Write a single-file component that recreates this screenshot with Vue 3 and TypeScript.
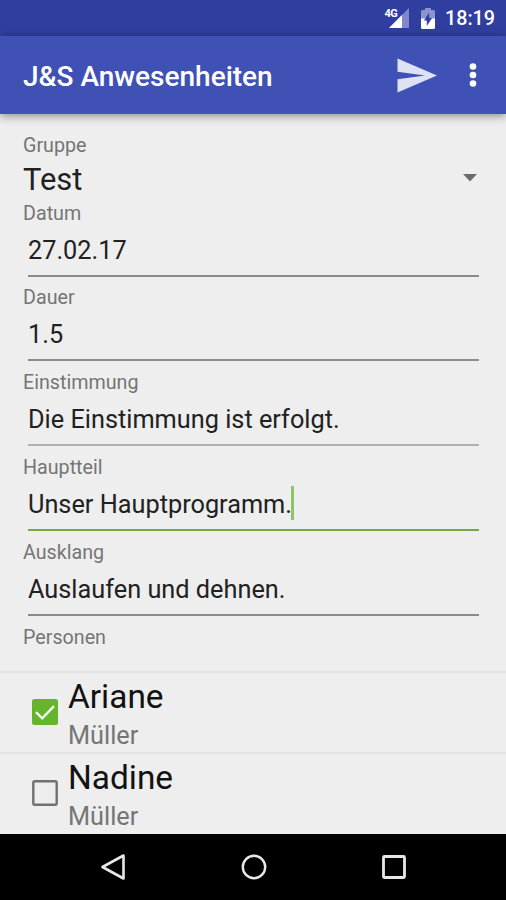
<script setup lang="ts">
import { ref } from 'vue'

interface Field {
  label: string
  value: string
  focused?: boolean
  soft?: boolean
}

interface Person {
  first: string
  last: string
  present: boolean
}

const fields = ref<Field[]>([
  { label: 'Datum', value: '27.02.17' },
  { label: 'Dauer', value: '1.5' },
  { label: 'Einstimmung', value: 'Die Einstimmung ist erfolgt.', soft: true },
  { label: 'Hauptteil', value: 'Unser Hauptprogramm.', focused: true },
  { label: 'Ausklang', value: 'Auslaufen und dehnen.' },
])

const people = ref<Person[]>([
  { first: 'Ariane', last: 'Müller', present: true },
  { first: 'Nadine', last: 'Müller', present: false },
])
</script>

<template>
  <div class="screen">
    <div class="status">
      <span class="network">4G</span>
      <svg class="signal" width="21" height="20" viewBox="0 0 21 20">
        <path d="M20 0V20H0Z" fill="#7f88cb" />
        <path d="M13 7V20H0Z" fill="#fff" />
      </svg>
      <svg class="battery" width="14" height="21" viewBox="0 0 14 21">
        <path d="M4 0h6v2h2.5Q14 2 14 3.5V11H0V3.5Q0 2 1.500 2H4Z" fill="#8c94d0" />
        <path d="M0 10.500H14V19.500Q14 21 12.500 21H1.500Q0 21 0 19.500Z" fill="#fff" />
        <path d="M8.200 4.500V10H11L5.800 18V12.500H3Z" fill="#303f9f" />
      </svg>
      <span class="clock">18:19</span>
    </div>
    <header class="bar">
      <h1 class="title">J&amp;S Anwesenheiten</h1>
      <svg class="send" width="40" height="35" viewBox="0 0 40 35">
        <path d="M0.500 0.500L40 17.500L0.500 34.500V21.200L28 17.500L0.500 13.800Z" fill="#dfe2f4" />
      </svg>
      <svg class="more" width="8" height="24" viewBox="0 0 8 24">
        <circle cx="4" cy="3.500" r="3.300" fill="#fff" />
        <circle cx="4" cy="12" r="3.300" fill="#fff" />
        <circle cx="4" cy="20.500" r="3.300" fill="#fff" />
      </svg>
    </header>
    <main class="content">
      <div class="label">Gruppe</div>
      <div class="spinner">
        <span>Test</span>
        <svg class="arrow" width="14" height="8" viewBox="0 0 14 8"><path d="M0 0H14L7 7.500Z" fill="#6b6b6b" /></svg>
      </div>
      <div v-for="f in fields" :key="f.label" class="field">
        <div class="label">{{ f.label }}</div>
        <div class="input" :class="{ focused: f.focused, soft: f.soft }">
          <span>{{ f.value }}</span><i v-if="f.focused" class="caret" />
        </div>
      </div>
      <div class="label">Personen</div>
    </main>
    <ul class="people">
      <li v-for="p in people" :key="p.first" class="person">
        <svg class="check" width="26" height="26" viewBox="0 0 26 26">
          <template v-if="p.present">
            <rect width="26" height="26" rx="2.500" fill="#66b42b" />
            <path d="M4 13.200L10.200 19.300L22 7.200" fill="none" stroke="#f4f9ef" stroke-width="2.400" />
          </template>
          <rect v-else x="1.300" y="1.300" width="23.400" height="23.400" rx="1.500" fill="none" stroke="#717171" stroke-width="2.400" />
        </svg>
        <div class="names">
          <div class="first">{{ p.first }}</div>
          <div class="last">{{ p.last }}</div>
        </div>
      </li>
    </ul>
    <nav class="nav">
      <svg width="26" height="28" viewBox="0 0 26 28"><path d="M2.500 14L23.500 2.500V25.500Z" fill="none" stroke="#e8e8e8" stroke-width="2.600" stroke-linejoin="round" /></svg>
      <svg width="26" height="28" viewBox="0 0 26 28"><circle cx="13" cy="14" r="11.200" fill="none" stroke="#e8e8e8" stroke-width="2.400" /></svg>
      <svg width="26" height="28" viewBox="0 0 26 28"><rect x="2.500" y="3.500" width="21" height="21" rx="1" fill="none" stroke="#e8e8e8" stroke-width="2.800" /></svg>
    </nav>
  </div>
</template>

<style>
body { margin: 0; background: #eee; }
</style>

<style scoped>
.screen {
  box-sizing: border-box;
  width: 506px;
  height: 900px;
  display: flex;
  flex-direction: column;
  overflow: hidden;
  background: #eee;
  font-family: Roboto, "Liberation Sans", sans-serif;
}
.status {
  flex: none;
  height: 36px;
  display: flex;
  align-items: center;
  justify-content: flex-end;
  padding-right: 11px;
  box-sizing: border-box;
  background: #303f9f;
  color: #fff;
}
.network {
  font-size: 11px;
  font-weight: 700;
  line-height: 10px;
  margin: -9px -8px 0 0;
  letter-spacing: -0.6px;
  z-index: 1;
}
.signal { margin-right: 11px; }
.battery { margin-right: 10px; }
.clock {
  font-size: 19.7px;
  font-weight: 500;
  line-height: 36px;
  padding-top: 2px;
}
.bar {
  flex: none;
  height: 78px;
  box-sizing: border-box;
  padding: 0 29px 0 23px;
  display: flex;
  align-items: center;
  background: #3f51b5;
  color: #fff;
  box-shadow: 0 2px 9px rgba(0, 0, 0, 0.42);
}
.title {
  flex: 1;
  margin: 0;
  padding-top: 3px;
  font-size: 28px;
  line-height: 32px;
  font-weight: 500;
  white-space: nowrap;
}
.send { margin-right: 32px; }
.content {
  flex: none;
  height: 557px;
  box-sizing: border-box;
  padding: 19.5px 27px 0 23px;
}
.label {
  height: 23px;
  line-height: 23px;
  font-size: 19.7px;
  color: #757575;
}
.spinner {
  height: 45px;
  display: flex;
  align-items: center;
  justify-content: space-between;
  font-size: 30.9px;
  line-height: 45px;
  color: #212121;
}
.arrow { margin: -3px 2px 0 0; }
.field { height: 84.9px; }
.input {
  height: 52px;
  box-sizing: border-box;
  margin-left: 5px;
  padding-top: 10px;
  display: flex;
  border-bottom: 2px solid #8b8b8b;
  font-size: 25.3px;
  line-height: 31px;
  color: #212121;
  white-space: nowrap;
}
.soft { border-color: #b0b0b0; }
.focused { border-color: #72aa4a; }
.caret {
  width: 3px;
  height: 34px;
  margin: -3px 0 0 -1px;
  background: #8bc66a;
}
.people {
  flex: none;
  height: 163px;
  margin: 0;
  padding: 0;
  list-style: none;
}
.person {
  height: 80.5px;
  box-sizing: border-box;
  border-top: 2px solid #e3e3e3;
  display: flex;
  align-items: center;
  padding-left: 32px;
}
.names { padding: 8px 0 0 10px; }
.first {
  font-size: 33.4px;
  line-height: 40px;
  color: #121212;
}
.last {
  font-size: 25.3px;
  line-height: 38px;
  color: #757575;
}
.nav {
  flex: none;
  height: 66px;
  box-sizing: border-box;
  padding: 0 99px 0 100px;
  display: flex;
  align-items: center;
  justify-content: space-between;
  background: #000;
}
</style>
